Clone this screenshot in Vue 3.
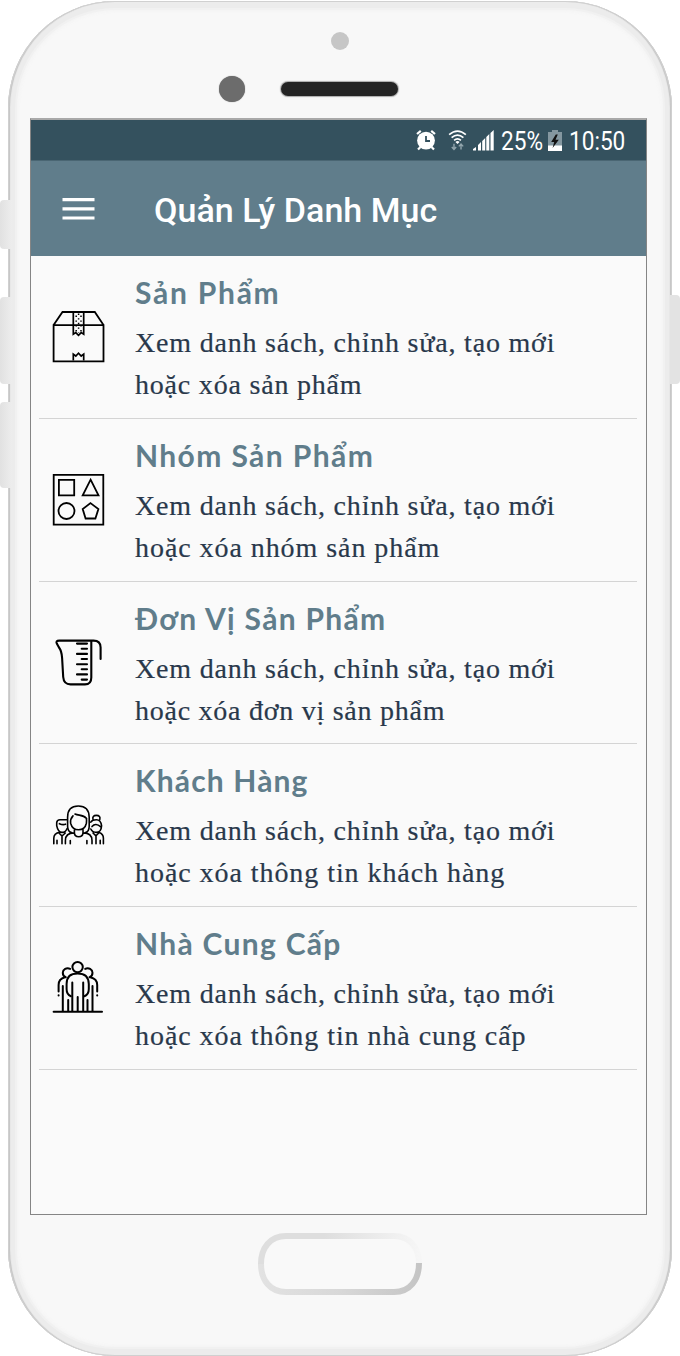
<script setup>
const items = [
  { icon: 'box', title: 'Sản Phẩm', tail: 'hoặc xóa sản phẩm' },
  { icon: 'shapes', title: 'Nhóm Sản Phẩm', tail: 'hoặc xóa nhóm sản phẩm' },
  { icon: 'jug', title: 'Đơn Vị Sản Phẩm', tail: 'hoặc xóa đơn vị sản phẩm' },
  { icon: 'people', title: 'Khách Hàng', tail: 'hoặc xóa thông tin khách hàng' },
  { icon: 'team', title: 'Nhà Cung Cấp', tail: 'hoặc xóa thông tin nhà cung cấp' },
]
</script>

<template>
  <div class="stage">
    <i class="key mute"></i>
    <i class="key up"></i>
    <i class="key down"></i>
    <i class="key power"></i>
    <div class="phone">
      <div class="top">
        <i class="sensor"></i>
        <i class="camera"></i>
        <i class="speaker"></i>
      </div>
      <div class="screen">
        <div class="status">
          <svg class="alarm" width="20" height="22" viewBox="0 0 20 22">
            <circle cx="10" cy="11.6" r="8.9" fill="#fff" />
            <path d="M1 5 4.8 1.8M19 5 15.2 1.8M4.5 18 2 20.5M15.5 18 18 20.5" stroke="#fff" stroke-width="2.2" />
            <path d="M10 7V12H14" fill="none" stroke="#34515e" stroke-width="1.8" />
          </svg>
          <svg class="wifi" width="19" height="23" viewBox="0 0 20 23">
            <g fill="none" stroke="#fff" stroke-width="1.8">
              <path d="M1.2 5.3Q10-2.2 18.8 5.3M3.8 8.5Q10 3.1 16.2 8.5M6.4 11.3Q10 8.2 13.6 11.3" />
            </g>
            <path d="M7.8 13.1Q10 11.2 12.2 13.1L10 15.2Z" fill="#fff" />
            <path d="M6.3 15V20M4 18.3 6.3 20.8 8.6 18.3M13.7 21V16M11.4 17.7 13.7 15.2 16 17.7" fill="none" stroke="#91a4ac" stroke-width="1.5" />
          </svg>
          <svg class="signal" width="21" height="21" viewBox="0 0 21 21" fill="#fff">
            <path d="M0 20.5V19L3 17V20.5ZM5 20.5V15L8 12V20.5ZM9.2 20.5V11L12.2 8V20.5ZM13.3 20.5V7L16.3 4V20.5ZM17.5 20.5V3L20.7 0V20.5Z" />
          </svg>
          <span class="pct">25%</span>
          <svg class="battery" width="14" height="21" viewBox="0 0 14 21">
            <path d="M0 2H4V0H10V2H14V16H0Z" fill="#8497a0" />
            <path d="M0 15.5H14V21H0Z" fill="#fff" />
            <path d="M7.8 4.5 3.2 12H6.2L4.6 18 10.8 9.8H7.5L9.8 4.5Z" fill="#111" />
          </svg>
          <span class="clock">10:50</span>
        </div>
        <header class="bar">
          <svg width="33" height="22" viewBox="0 0 33 22"><path d="M0.5 1.7H32.5M0.5 10.8H32.5M0.5 20H32.5" stroke="#fff" stroke-width="3.2" /></svg>
          <h1>Quản Lý Danh Mục</h1>
        </header>
        <ul>
          <li v-for="it in items" :key="it.icon">
            <div class="pic">
              <svg width="56" height="56" viewBox="0 0 56 56" fill="none" stroke="#000" stroke-width="1.8">
                <g v-if="it.icon === 'box'" transform="translate(0 .6)">
                  <path d="M3.6 17.5H53.5V53.7H3.6ZM3.6 17.5 12.5 4.4H44.8L53.5 17.5" />
                  <path d="M23.3 4V26.6L25.8 25 28.5 27.8 31.2 25 33.7 26.6V4M23.3 53V46.5L25.8 48.4 28.5 45.6 31.2 48.4 33.7 46.5V53" stroke-width="1.7" />
                  <path d="M26.2 8V25M31 8V25" stroke-width="1.5" stroke-dasharray="1.4 3.4" />
                  <path d="M28.6 6V25" stroke-width="1.5" stroke-dasharray="1.4 3.2" />
                </g>
                <g v-else-if="it.icon === 'shapes'" transform="translate(0 .4)">
                  <path d="M3.7 4.4H53.3V54.2H3.7ZM8.9 9.4H24.2V24.9H8.9ZM40.6 9.3 48.5 24.9H32.7ZM40.5 32.7 48.4 38.7 45.4 48.1H35.6L32.7 38.7Z" />
                  <circle cx="16.5" cy="40.6" r="8" />
                </g>
                <g v-else-if="it.icon === 'jug'" stroke-linecap="round" stroke-linejoin="round" stroke-width="2.1">
                  <path d="M41.3 7.6V44.5Q41.3 51.4 35 51.4H20.5Q13.8 51.4 13.2 44L12.1 25Q11.7 18 9 14.5L6.8 10.6Q5.4 7.6 9.2 7.6H43.5Q50.6 7.6 50.6 14.5V26" />
                  <path d="M27 10.6H37M31.7 15.8H37M27 20.9H37M31.7 26H37M27 31.3H37M31.7 36.3H37M27 41.4H37M31.7 46.6H37" />
                </g>
                <g v-else-if="it.icon === 'people'" transform="translate(0 3.2)" stroke-linecap="round" stroke-linejoin="round" stroke-width="1.6">
                  <path d="M22 34.6Q17.6 33.5 17.6 28V19Q17.6 7.8 28.3 7.8T39.2 19V28Q39.2 33.5 35 34.6M25 15.8C29 17.6 33 16.2 36.6 20.3M23 17.7Q20 21 20.6 25Q22.4 31.6 28.6 31.6T36.4 25Q37 22 36.2 19.8M24.4 31.5V34.4C24.4 40 33 40 33 34.4V31.5M24 34.7C18 34.7 15.4 37 15.4 42.4V45.5M33.4 34.7C39 34.7 42 37 42 42.4V45.5M20.3 42.4V45.5M36.9 42.4V45.5" />
                  <path d="M16.6 21.6H10Q7 21.6 6.7 24.5V27.5Q8 34.2 12 34.2Q15.4 34.2 17 30.5M9.4 25.5Q13 27 15.5 26M9.8 34C5 34.8 3.8 37 3.8 40V45.5M7 42V45.5M9.2 35 12 37.8 15.3 34.8M12 38V45.5" />
                  <path d="M40.8 24Q42.2 21.5 46.5 21.6T51.6 27.6Q51.2 34.2 46.4 34.2Q42.5 34.2 40.8 30.8M42 28.4Q45.5 24 50.8 28.6M43 21.3Q42 17.2 46.4 17.2T49.8 21.3M43 34.8 46 37.6 49.2 34.3C52.6 35.5 53.4 37 53.4 40V45.5M50.2 42V45.5M46 38V45.5" />
                </g>
                <g v-else stroke-linecap="round" stroke-width="2" transform="translate(-.4 0)">
                  <path d="M4 53.8H52.4" />
                  <circle cx="28" cy="9.1" r="5.2" />
                  <path d="M21.3 38.2Q17 36.6 17 31V26Q17 15.6 28 15.6T39.2 26V31Q39.2 36.6 34.8 38.2" />
                  <path d="M22.7 24.5V53M33.6 24.5V53M28.1 39V53M18.6 42V53M37.9 42V53M13.2 28V53M42.9 28V53" />
                  <path d="M20.5 10.9C17 9.2 13.2 11.5 13.2 14.8Q13.2 18.3 16.2 19.3M35.6 10.9C39 9.2 42.9 11.5 42.9 14.8Q42.9 18.3 39.9 19.3M15.4 19.2Q9 20.6 9 27V33.5M40.7 19.2Q47.6 20.6 47.6 27V33.5M9 37.2V37.4M47.6 37.2V37.4" />
                </g>
              </svg>
            </div>
            <div class="copy">
              <h2 :class="it.icon">{{ it.title }}</h2>
              <p>Xem danh sách, chỉnh sửa, tạo mới<br /><span :class="it.icon">{{ it.tail }}</span></p>
            </div>
          </li>
        </ul>
      </div>
      <svg class="home" width="168" height="66" viewBox="0 0 168 66" fill="none">
        <defs>
          <linearGradient id="upper"><stop offset="0" stop-color="#dedede" /><stop offset=".4" stop-color="#dedede" /><stop offset="1" stop-color="#f6f6f6" /></linearGradient>
          <linearGradient id="lower"><stop offset="0" stop-color="#e2e2e2" /><stop offset=".5" stop-color="#d8d8d8" /><stop offset="1" stop-color="#c5c5c5" /></linearGradient>
        </defs>
        <rect x="7" y="7" width="154" height="52" rx="26" fill="#f9f9f9" />
        <path d="M5 33C5 17 14 5 30 5H138C154 5 163 17 163 32" stroke="url(#upper)" stroke-width="6" />
        <path d="M5 33C5 49 14 61 30 61H138C154 61 163 49 163 32" stroke="url(#lower)" stroke-width="6" />
      </svg>
    </div>
  </div>
</template>

<style>
body { background: #fff; }
</style>

<style scoped>
* { box-sizing: border-box; }
.stage { position: relative; width: 680px; height: 1356px; padding: 1px 8px 0; overflow: hidden; font-family: Roboto, sans-serif; }
.phone {
  position: relative; height: 1355px; border-radius: 107px; background: #f8f8f8;
  box-shadow: inset 0 0 0 1px #d0d0d0, inset 2px 0 1px #c4c4c4, inset -2px 0 1px #c4c4c4, inset 0 0 0 7px #ececec, inset 0 0 0 9px #f1f1f1, inset 0 0 3px 11px #f5f5f5;
  display: flex; flex-direction: column;
}
.key { position: absolute; z-index: 1; background: linear-gradient(90deg, #e1e1e1, #ededed); border-radius: 4px 0 0 4px; width: 12px; left: 0; }
.mute { top: 200px; height: 49px; }
.up { top: 297px; height: 87px; }
.down { top: 402px; height: 86px; }
.power { top: 295px; height: 89px; left: auto; right: 0; width: 10px; background: #e3e3e3; border-radius: 0 4px 4px 0; }
.top { position: relative; height: 117px; flex: none; }
.top i { position: absolute; }
.sensor { left: 323px; top: 31px; width: 18px; height: 18px; border-radius: 50%; background: #c6c6c6; }
.camera { left: 211px; top: 75px; width: 26px; height: 26px; border-radius: 50%; background: #6c6c6c; box-shadow: 0 0 1px #777; }
.speaker { left: 273px; top: 81px; width: 117px; height: 14px; border-radius: 7px; background: #242424; box-shadow: 0 0 1px 1px #aaa; }
.screen { margin-left: 22px; width: 617px; height: 1097px; flex: none; background: #fafafa; border: 1px solid #858585; border-top: 2px solid #a9a9a9; }
.status { height: 41px; background: #34515e; display: flex; align-items: center; color: #fff; font-size: 26px; line-height: 41px; border-bottom: 1px solid #4a6673; }
.alarm { margin-left: 385px; flex: none; }
.wifi { margin-left: 12px; flex: none; }
.signal { margin-left: 6px; flex: none; }
.pct { margin-left: 7px; width: 43px; flex: none; }
.battery { margin-left: 4px; flex: none; }
.clock { margin-left: 7px; width: 58px; flex: none; }
.pct, .clock { transform-origin: 0 50%; white-space: nowrap; }
.pct { transform: translateY(1px) scaleX(.87); }
.clock { transform: translateY(1px) scaleX(.87); }
.bar { height: 95px; background: #607d8b; display: flex; align-items: center; padding-left: 31px; }
.bar h1 { margin: 2px 0 0 59px; color: #fff; font-size: 34px; font-weight: 500; line-height: 40px; white-space: nowrap; letter-spacing: .05px; }
ul { list-style: none; margin: 0; padding: 0 9px 0 8px; }
li { height: 162.75px; display: flex; border-bottom: 1px solid #d4d4d4; }
.pic { width: 96px; padding: 51px 0 0 11px; flex: none; }
.pic svg { display: block; }
h2 { margin: 16px 0 0; color: #607d8b; font: 700 30px/40px Lato, "Noto Sans", sans-serif; white-space: nowrap; letter-spacing: 1.3px; }
h2.box { letter-spacing: 1.75px; }
h2.shapes { letter-spacing: 1.4px; }
h2.people { letter-spacing: 1.15px; }
p { margin: 10px 0 0; color: #29384b; font: 28px/42px "Liberation Serif", serif; white-space: nowrap; letter-spacing: .8px; -webkit-text-stroke: .2px #29384b; }
p .jug { letter-spacing: .74px; }
p .shapes, p .people, p .team { letter-spacing: .94px; }
.home { align-self: center; margin-top: 16px; flex: none; }
</style>
